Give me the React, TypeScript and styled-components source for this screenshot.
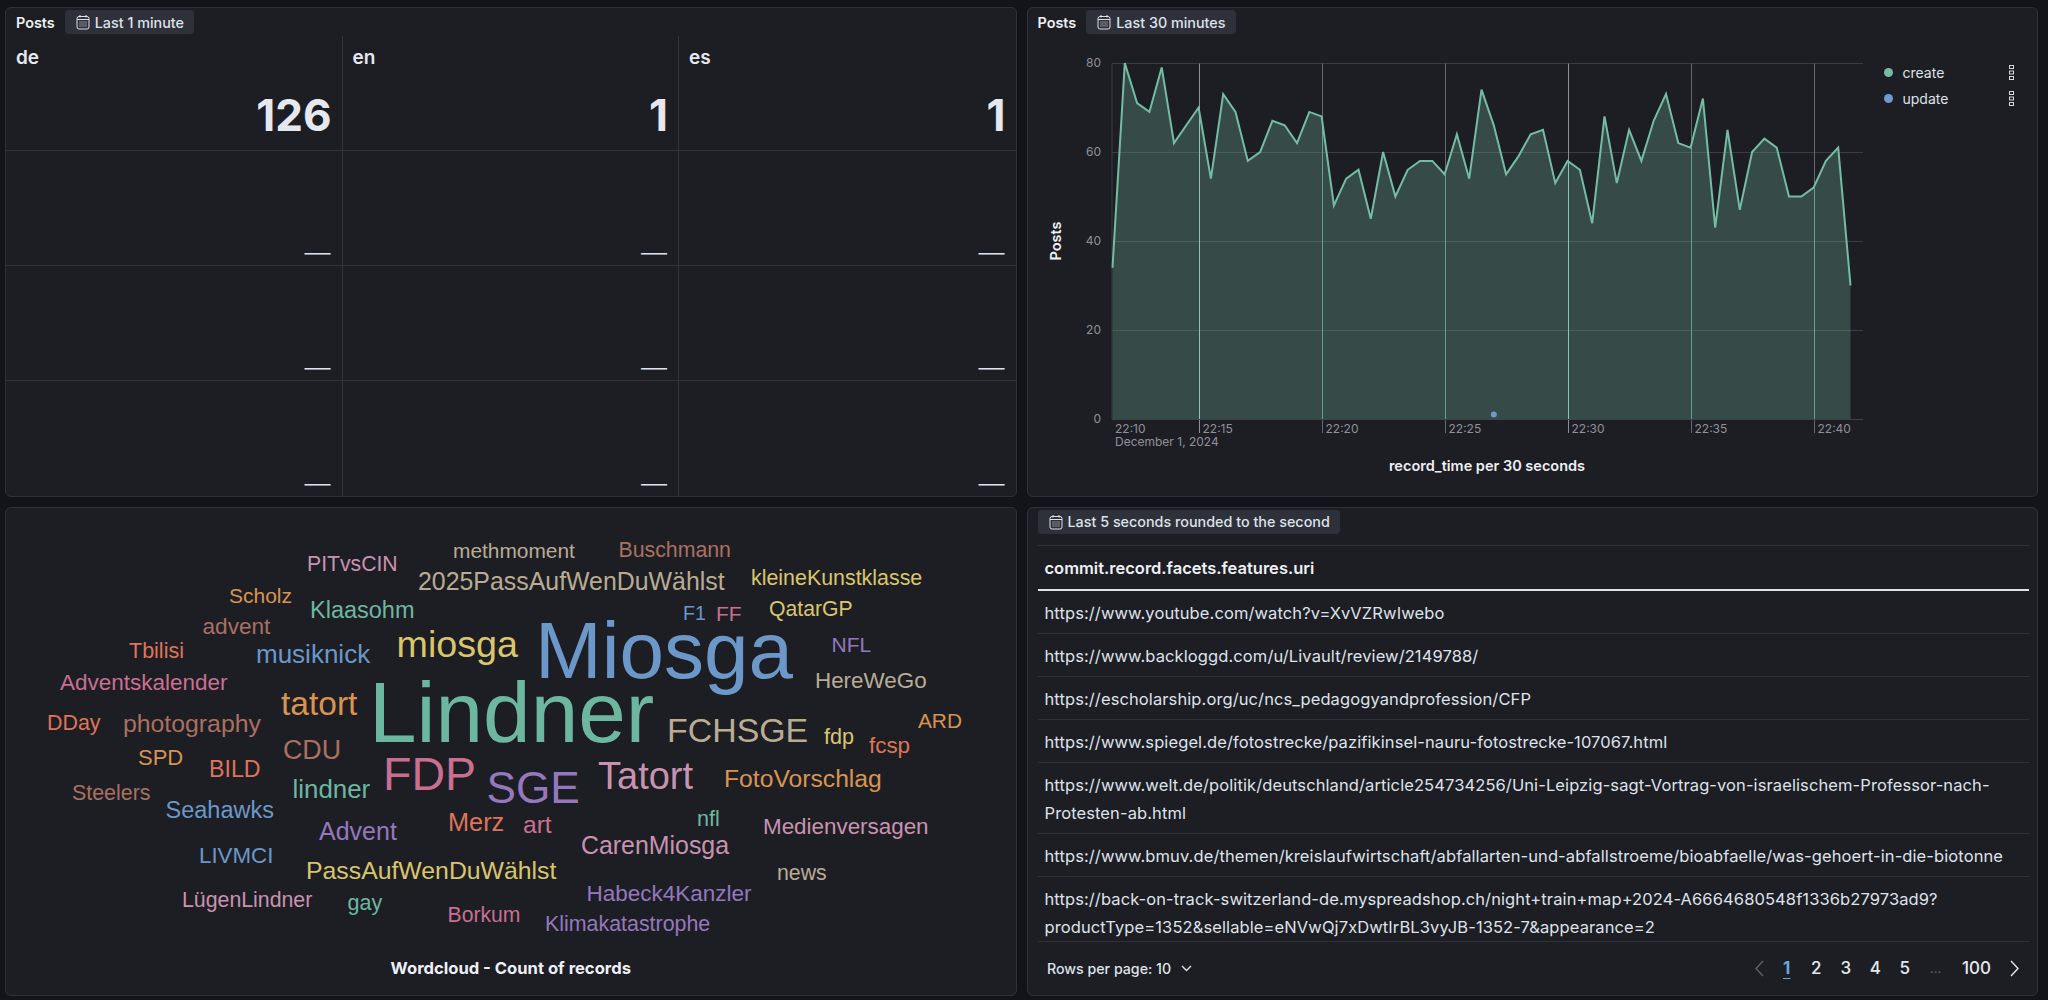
import * as React from 'react'
import styled, { createGlobalStyle } from 'styled-components'

const GlobalStyle = createGlobalStyle`
  html, body {
    margin: 0;
    height: 1000px;
    overflow: hidden;
    background: #13141a;
    font-family: Inter, 'Liberation Sans', sans-serif;
    color: #dfe5ef;
  }
`

const Page = styled.div`
  display: grid;
  grid-template-columns: 1fr 1fr;
  grid-template-rows: 1fr 1fr;
  gap: 10px;
  box-sizing: border-box;
  width: 2048px;
  height: 1000px;
  padding: 7px 10px 4px 5px;
`

const Panel = styled.section`
  display: flex;
  flex-direction: column;
  min-width: 0;
  min-height: 0;
  background: #1d1e24;
  border: 1px solid #30323a;
  border-radius: 6px;
`

const PanelHeader = styled.header`
  display: flex;
  flex: none;
  align-items: center;
  gap: 10px;
  height: 28px;
  padding: 2px 10px 2px;
  box-sizing: border-box;
`

const PanelTitle = styled.span`
  font-size: 14.4px;
  font-weight: 600;
  color: #eef0f5;
`

const TimeBadge = styled.span`
  display: inline-flex;
  align-items: center;
  gap: 5px;
  height: 24px;
  padding: 0 10px 0 11px;
  background: #2f313a;
  border-radius: 4px;
  font-size: 14.35px;
  font-weight: 500;
  color: #dfe2ea;
  white-space: nowrap;
`

const CalendarIcon: React.FC = () => (
  <svg width="14" height="16" viewBox="0 0 14 16" fill="none" stroke="currentColor" strokeWidth="1">
    <rect x="1" y="2.5" width="12" height="12.5" rx="2" />
    <path d="M1 5.5h12M4 1v2.5M10 1v2.5" />
    <path d="M3.5 8h7M3.5 10h7M3.5 12h7" strokeDasharray="1 1" />
  </svg>
)

const MetricGrid = styled.div`
  display: grid;
  flex: 1;
  grid-template-columns: repeat(3, 1fr);
  grid-template-rows: repeat(4, 115px);
`

const MetricCell = styled.div<{ $last?: boolean; $empty?: boolean }>`
  display: flex;
  flex-direction: column;
  justify-content: space-between;
  box-sizing: border-box;
  padding: 10px ${(p) => (p.$empty ? '11px' : '10px')} ${(p) => (p.$empty ? '2px' : '10px')} 10px;
  border-right: ${(p) => (p.$last ? 'none' : '1px solid #33353d')};
  border-bottom: 1px solid #33353d;
  &:nth-last-child(-n + 3) {
    border-bottom: none;
  }
`

const MetricLabel = styled.div`
  font-size: 19px;
  font-weight: 600;
  line-height: 24px;
  color: #e6e8ef;
`

const MetricValue = styled.div`
  font-size: 44px;
  font-weight: 700;
  line-height: 50px;
  text-align: right;
  color: #e6e8ef;
`

const MetricEmpty = styled.div`
  margin-top: auto;
  font-size: 26px;
  font-weight: 300;
  line-height: 20px;
  text-align: right;
  color: #dfe2ea;
`

const ChartBody = styled.div`
  display: flex;
  flex: 1;
  min-height: 0;
`

const ChartSvg = styled.svg`
  flex: none;
  display: block;
`

const TickLabel = styled.text`
  font-family: Inter, sans-serif;
  font-size: 12px;
  fill: #8f9199;
`

const AxisTitle = styled.text`
  font-family: Inter, sans-serif;
  font-size: 14.5px;
  font-weight: 600;
  fill: #eef0f5;
`

const Legend = styled.ul`
  display: flex;
  flex: 1;
  flex-direction: column;
  margin: 0;
  padding: 23px 23px 0 11px;
  list-style: none;
`

const LegendRow = styled.li`
  display: flex;
  align-items: center;
  gap: 10px;
  height: 26px;
  font-size: 14px;
  color: #dfe2ea;
`

const LegendDot = styled.span<{ $color: string }>`
  width: 9px;
  height: 9px;
  border-radius: 50%;
  background: ${(p) => p.$color};
`

const LegendMenu = styled.svg`
  margin-left: auto;
`

const BoxesVertical: React.FC = () => (
  <LegendMenu width="5" height="15" viewBox="0 0 5 15" fill="none" stroke="#d5d7dd" strokeWidth="1">
    <rect x="0.5" y="0.5" width="4" height="3" />
    <rect x="0.5" y="6" width="4" height="3" />
    <rect x="0.5" y="11.5" width="4" height="3" />
  </LegendMenu>
)

const CloudSvg = styled.svg`
  display: block;
  flex: none;
`

const CloudWord = styled.text<{ $color: string }>`
  font-family: 'Liberation Sans', Arial, sans-serif;
  fill: ${(p) => p.$color};
`

const CloudCaption = styled.div`
  font-size: 16.6px;
  font-weight: 700;
  line-height: 20px;
  text-align: center;
  color: #eef0f5;
`

const TableWrap = styled.div`
  display: flex;
  flex: 1;
  flex-direction: column;
  min-height: 0;
  padding: 2px 8.5px 0 10px;
`

const TableTop = styled.div`
  height: 35px;
`

const UriTable = styled.table`
  width: 100%;
  border-collapse: collapse;
  font-size: 16.5px;
  line-height: 28px;
`

const HeadCell = styled.th`
  height: 45px;
  padding: 2px 7px 0;
  box-sizing: border-box;
  text-align: left;
  font-weight: 600;
  color: #eef0f5;
  border-top: 1px solid #30323a;
  border-bottom: 2px solid #dfe2ea;
`

const BodyCell = styled.td<{ $clipped?: boolean }>`
  padding: 8px 7px ${(p) => (p.$clipped ? '0' : '6px')};
  letter-spacing: 0.1px;
  color: #dfe2ea;
  border-bottom: 1px solid #30323a;
  overflow-wrap: anywhere;
`

const Footer = styled.footer`
  display: flex;
  align-items: center;
  justify-content: space-between;
  height: 52px;
  padding: 0 1px 0 9.5px;
  font-size: 14.2px;
`

const RowsPerPage = styled.span`
  display: inline-flex;
  align-items: center;
  gap: 10px;
  font-weight: 500;
  color: #dfe2ea;
`

const Pager = styled.nav`
  display: flex;
  align-items: center;
`

const PageButton = styled.span<{ $w?: number; $active?: boolean }>`
  display: inline-flex;
  align-items: center;
  justify-content: center;
  width: ${(p) => p.$w ?? 29.5}px;
  font-size: 17px;
  font-weight: ${(p) => (p.$active ? 700 : 500)};
  color: ${(p) => (p.$active ? '#6ba6df' : '#e6e8ef')};
  text-decoration: ${(p) => (p.$active ? 'underline' : 'none')};
  text-underline-offset: 4px;
`

const PageGap = styled.span`
  display: inline-flex;
  justify-content: center;
  width: 32px;
  font-size: 13px;
  color: #5f616a;
`

const values = [
  34, 80, 71, 69, 79, 62, 66, 70, 54, 73, 69, 58, 60, 67, 66, 62, 69, 68, 48, 54, 56, 45, 60, 50, 56, 58, 58, 55, 64,
  54, 74, 66, 55, 59, 64, 65, 53, 58, 56, 44, 68, 53, 65, 58, 67, 73, 62, 61, 72, 43, 65, 47, 60, 63, 61, 50, 50, 52,
  58, 61, 30,
]

const xAt = (i: number) => 1112.5 + i * 12.3
const yAt = (v: number) => 419 - v * 4.45

const ticks = [
  { index: 7, label: '22:15', strong: true },
  { index: 17, label: '22:20' },
  { index: 27, label: '22:25' },
  { index: 37, label: '22:30', strong: true },
  { index: 47, label: '22:35' },
  { index: 57, label: '22:40' },
]

const TimeChart: React.FC = () => {
  const line = values.map((v, i) => `${xAt(i).toFixed(1)},${yAt(v).toFixed(1)}`).join(' ')
  const area = `1112.5,419 ${line} ${xAt(60).toFixed(1)},419`
  return (
    <ChartSvg width="845" height="458" viewBox="1028 36 845 458">
      {[0, 20, 40, 60, 80].map((v) => (
        <TickLabel key={v} x="1101" y={yAt(v) + 4} textAnchor="end">
          {v}
        </TickLabel>
      ))}
      <line x1="1112" x2="1112" y1="63.5" y2="419" stroke="#3b3d45" />
      {[20, 40, 60, 80].map((v) => (
        <line key={v} x1="1112" x2="1863" y1={Math.round(yAt(v)) + 0.5} y2={Math.round(yAt(v)) + 0.5} stroke="#3b3d45" />
      ))}
      {ticks.map((t) => (
        <line
          key={t.index}
          x1={Math.round(xAt(t.index)) + 0.5}
          x2={Math.round(xAt(t.index)) + 0.5}
          y1="63.5"
          y2="433"
          stroke={t.strong ? '#8c8e95' : '#66686f'}
        />
      ))}
      <polygon points={area} fill="#364b47" />
      <clipPath id="areaClip">
        <polygon points={area} />
      </clipPath>
      {[20, 40, 60].map((v) => (
        <line
          key={v}
          x1="1112.5"
          x2={xAt(60)}
          y1={Math.round(yAt(v)) + 0.5}
          y2={Math.round(yAt(v)) + 0.5}
          stroke="#49605a"
          clipPath="url(#areaClip)"
        />
      ))}
      {ticks.map((t) => (
        <line
          key={t.index}
          x1={Math.round(xAt(t.index)) + 0.5}
          x2={Math.round(xAt(t.index)) + 0.5}
          y1={yAt(values[t.index])}
          y2="419"
          stroke={t.strong ? '#8fc4b2' : '#6c9e8f'}
        />
      ))}
      <line x1="1112" x2="1863" y1="419.5" y2="419.5" stroke="#3f4249" />
      <polyline points={line} fill="none" stroke="#74bda4" strokeWidth="2" strokeLinejoin="miter" />
      <circle cx={xAt(31)} cy={yAt(1)} r="3" fill="#6f9acb" />
      <TickLabel x="1115" y="433">
        22:10
      </TickLabel>
      <TickLabel x="1115" y="446">
        December 1, 2024
      </TickLabel>
      {ticks.map((t) => (
        <TickLabel key={t.label} x={Math.round(xAt(t.index)) + 3.5} y="433">
          {t.label}
        </TickLabel>
      ))}
      <AxisTitle x="1487" y="471" textAnchor="middle">
        record_time per 30 seconds
      </AxisTitle>
      <AxisTitle x="1061" y="241" textAnchor="middle" transform="rotate(-90 1061 241)">
        Posts
      </AxisTitle>
    </ChartSvg>
  )
}

const palette = {
  green: '#6db7a1',
  blue: '#6b98c8',
  pink: '#c96f91',
  purple: '#9478bd',
  mauve: '#c893b0',
  yellow: '#d9c66c',
  tan: '#b9ac93',
  orange: '#d9944f',
  brown: '#aa7061',
  red: '#df7459',
}

type Word = [string, number, number, number, keyof typeof palette]

const words: Word[] = [
  ['methmoment', 453, 557, 20.9, 'tan'],
  ['Buschmann', 618.5, 556, 21.3, 'brown'],
  ['PITvsCIN', 307, 570, 21.2, 'mauve'],
  ['2025PassAufWenDuWählst', 418, 589, 24.9, 'tan'],
  ['kleineKunstklasse', 751, 584, 21.4, 'yellow'],
  ['Scholz', 229, 602, 21, 'orange'],
  ['Klaasohm', 310, 617, 23.5, 'green'],
  ['F1', 683, 619, 19.6, 'blue'],
  ['FF', 716, 620, 21, 'pink'],
  ['QatarGP', 769, 615, 21.2, 'yellow'],
  ['advent', 202.5, 633, 22.6, 'brown'],
  ['Miosga', 535, 677, 80, 'blue'],
  ['NFL', 831.5, 651, 21, 'purple'],
  ['miosga', 396.5, 656, 37.7, 'yellow'],
  ['musiknick', 256, 662, 26, 'blue'],
  ['Tbilisi', 129, 657, 21.5, 'red'],
  ['Adventskalender', 60, 689, 22.5, 'pink'],
  ['HereWeGo', 815, 687, 22.4, 'tan'],
  ['Lindner', 369, 741, 85.5, 'green'],
  ['tatort', 281, 714, 33.5, 'orange'],
  ['FCHSGE', 667, 741, 33.9, 'tan'],
  ['fdp', 824, 743, 21.6, 'yellow'],
  ['ARD', 918, 727, 20.8, 'orange'],
  ['fcsp', 869, 752, 22.4, 'red'],
  ['DDay', 47, 729, 21.4, 'red'],
  ['photography', 123, 731, 24.8, 'brown'],
  ['CDU', 283, 758, 26.8, 'brown'],
  ['SPD', 138, 764, 22, 'orange'],
  ['BILD', 209, 776, 23.2, 'red'],
  ['FDP', 383, 789, 46.5, 'pink'],
  ['SGE', 486.5, 802, 44.2, 'purple'],
  ['Tatort', 598, 788, 38, 'mauve'],
  ['FotoVorschlag', 724, 786, 24.7, 'orange'],
  ['lindner', 292.5, 797, 25.9, 'green'],
  ['Steelers', 72, 799, 21.4, 'brown'],
  ['Seahawks', 165.5, 817, 23.5, 'blue'],
  ['Merz', 448, 830, 25.3, 'red'],
  ['art', 523, 832, 24.6, 'pink'],
  ['nfl', 697, 825, 21.6, 'green'],
  ['Medienversagen', 763, 833, 22.4, 'mauve'],
  ['Advent', 319, 839, 25, 'purple'],
  ['CarenMiosga', 581, 853, 24.9, 'mauve'],
  ['LIVMCI', 199, 862, 22.3, 'blue'],
  ['PassAufWenDuWählst', 306, 878, 24.8, 'yellow'],
  ['news', 777, 879, 21.3, 'tan'],
  ['Habeck4Kanzler', 586.5, 900, 22.5, 'purple'],
  ['LügenLindner', 182, 906, 21.3, 'mauve'],
  ['gay', 347.5, 909, 21.5, 'green'],
  ['Borkum', 447.5, 921, 21.2, 'pink'],
  ['Klimakatastrophe', 545, 930, 21.4, 'purple'],
]

const uris = [
  'https://www.youtube.com/watch?v=XvVZRwIwebo',
  'https://www.backloggd.com/u/Livault/review/2149788/',
  'https://escholarship.org/uc/ncs_pedagogyandprofession/CFP',
  'https://www.spiegel.de/fotostrecke/pazifikinsel-nauru-fotostrecke-107067.html',
  'https://www.welt.de/politik/deutschland/article254734256/Uni-Leipzig-sagt-Vortrag-von-israelischem-Professor-nach-Protesten-ab.html',
  'https://www.bmuv.de/themen/kreislaufwirtschaft/abfallarten-und-abfallstroeme/bioabfaelle/was-gehoert-in-die-biotonne',
  'https://back-on-track-switzerland-de.myspreadshop.ch/night+train+map+2024-A6664680548f1336b27973ad9?productType=1352&sellable=eNVwQj7xDwtIrBL3vyJB-1352-7&appearance=2',
]

const Chevron: React.FC<{ d: string; w: number; h: number; color: string }> = ({ d, w, h, color }) => (
  <svg width={w} height={h} viewBox={`0 0 ${w} ${h}`} fill="none" stroke={color} strokeWidth="1.4">
    <path d={d} />
  </svg>
)

const App: React.FC = () => {
  const rows = ['de', 'en', 'es']
  const totals = ['126', '1', '1']
  return (
    <Page>
      <GlobalStyle />
      <Panel>
        <PanelHeader>
          <PanelTitle>Posts</PanelTitle>
          <TimeBadge>
            <CalendarIcon />
            Last 1 minute
          </TimeBadge>
        </PanelHeader>
        <MetricGrid>
          {rows.map((name, i) => (
            <MetricCell key={name} $last={i === 2}>
              <MetricLabel>{name}</MetricLabel>
              <MetricValue>{totals[i]}</MetricValue>
            </MetricCell>
          ))}
          {Array.from({ length: 9 }, (_, i) => (
            <MetricCell key={i} $last={i % 3 === 2} $empty>
              <MetricEmpty>—</MetricEmpty>
            </MetricCell>
          ))}
        </MetricGrid>
      </Panel>

      <Panel>
        <PanelHeader>
          <PanelTitle>Posts</PanelTitle>
          <TimeBadge>
            <CalendarIcon />
            Last 30 minutes
          </TimeBadge>
        </PanelHeader>
        <ChartBody>
          <TimeChart />
          <Legend>
            <LegendRow>
              <LegendDot $color="#74bda4" />
              create
              <BoxesVertical />
            </LegendRow>
            <LegendRow>
              <LegendDot $color="#6f9acb" />
              update
              <BoxesVertical />
            </LegendRow>
          </Legend>
        </ChartBody>
      </Panel>

      <Panel>
        <CloudSvg width="1010" height="450" viewBox="6 507 1010 450">
          {words.map(([text, x, y, size, color]) => (
            <CloudWord key={text} x={x} y={y} fontSize={size} $color={palette[color]}>
              {text}
            </CloudWord>
          ))}
        </CloudSvg>
        <CloudCaption>Wordcloud - Count of records</CloudCaption>
      </Panel>

      <Panel>
        <TableWrap>
          <TableTop>
            <TimeBadge>
              <CalendarIcon />
              Last 5 seconds rounded to the second
            </TimeBadge>
          </TableTop>
          <UriTable>
            <thead>
              <tr>
                <HeadCell>commit.record.facets.features.uri</HeadCell>
              </tr>
            </thead>
            <tbody>
              {uris.map((uri, i) => (
                <tr key={uri}>
                  <BodyCell $clipped={i === uris.length - 1}>{uri}</BodyCell>
                </tr>
              ))}
            </tbody>
          </UriTable>
          <Footer>
            <RowsPerPage>
              Rows per page: 10
              <Chevron d="M1 1l4.5 4.5L10 1" w={11} h={7} color="#dfe2ea" />
            </RowsPerPage>
            <Pager>
              <PageButton $w={25}>
                <Chevron d="M9 1L2 8.5L9 16" w={11} h={17} color="#5f616a" />
              </PageButton>
              <PageButton $active>1</PageButton>
              <PageButton>2</PageButton>
              <PageButton>3</PageButton>
              <PageButton>4</PageButton>
              <PageButton>5</PageButton>
              <PageGap>…</PageGap>
              <PageButton $w={50}>100</PageButton>
              <PageButton $w={26}>
                <Chevron d="M2 1L9 8.5L2 16" w={11} h={17} color="#e6e8ef" />
              </PageButton>
            </Pager>
          </Footer>
        </TableWrap>
      </Panel>
    </Page>
  )
}

export default App
